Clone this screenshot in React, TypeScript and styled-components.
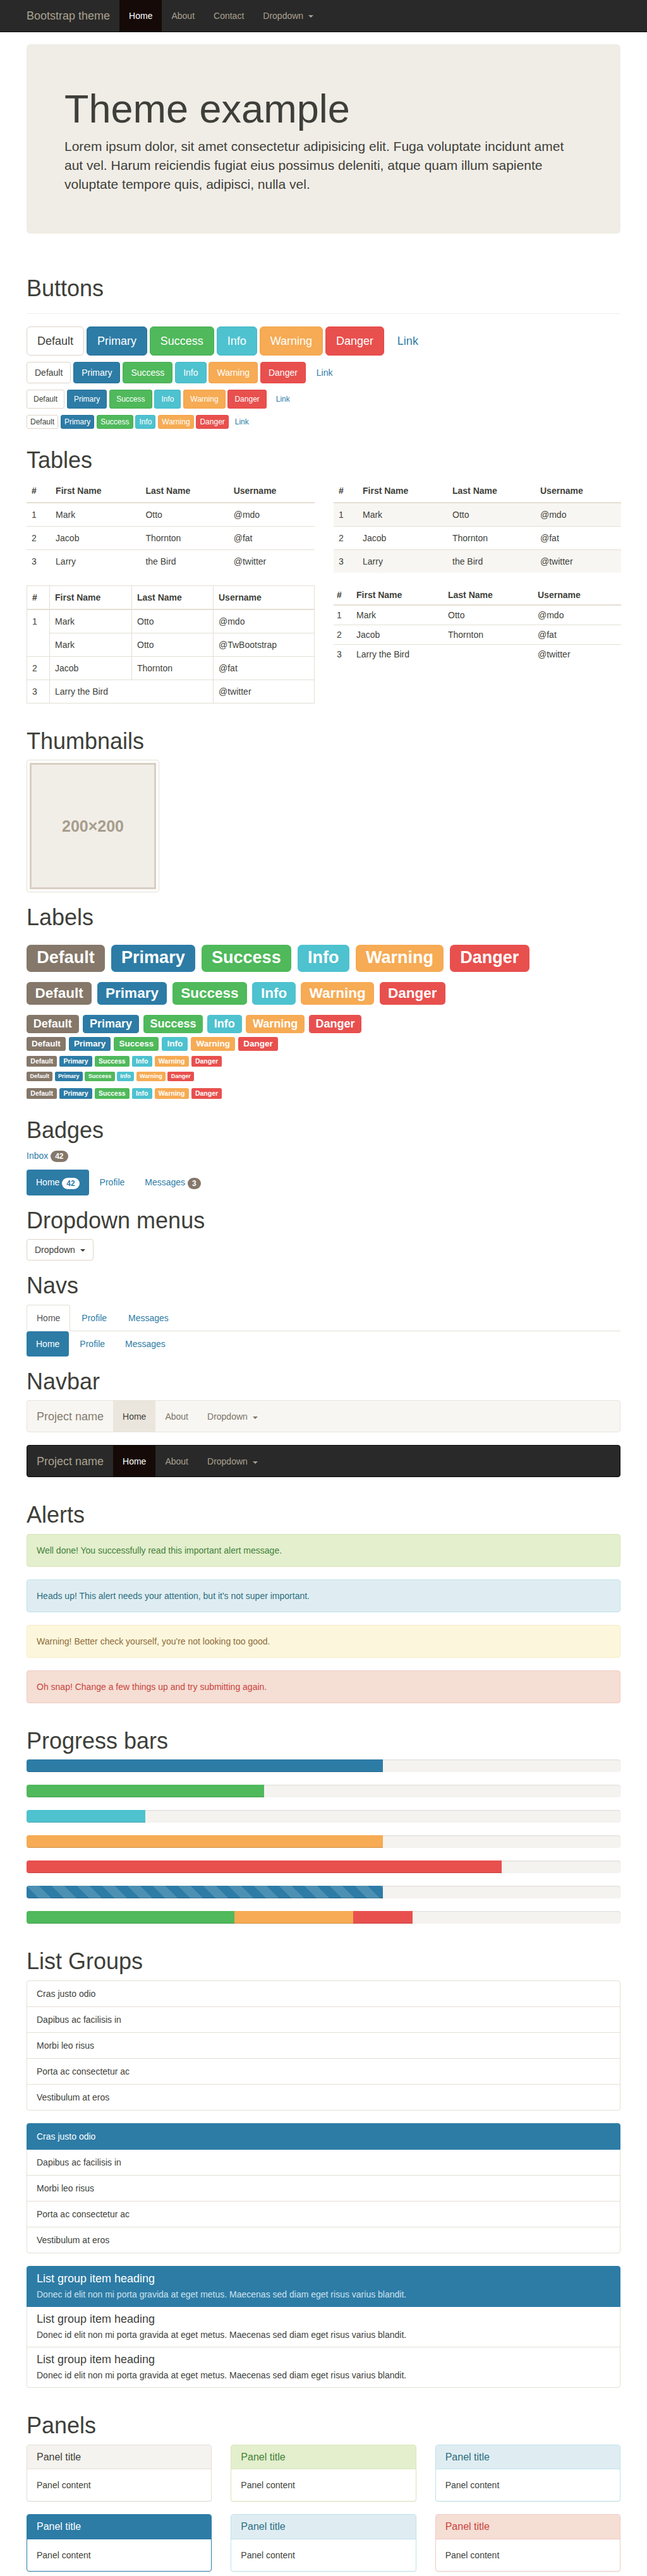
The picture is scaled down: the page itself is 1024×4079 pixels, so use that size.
import { Fragment } from 'react'
import styled, { createGlobalStyle, css } from 'styled-components'

type Variant = 'default' | 'primary' | 'success' | 'info' | 'warning' | 'danger'
type Tone = 'default' | 'primary' | 'success' | 'info' | 'warning' | 'danger'

const primary = '#2d7ca6'
const text = '#3e3f3a'
const line = '#e4dfd5'

const solid: Record<Variant, string> = {
  default: '#85786a',
  primary: '#2d7ca6',
  success: '#4fb95b',
  info: '#4ec2cf',
  warning: '#f6ab54',
  danger: '#e8504e',
}

const edge: Record<Variant, string> = {
  default: '#ddd5c8',
  primary: '#29719a',
  success: '#47ac52',
  info: '#44b8c5',
  warning: '#f4a246',
  danger: '#e54543',
}

const tones: Record<Tone, { bg: string; fg: string; border: string }> = {
  default: { bg: '#f5f3ef', fg: text, border: line },
  primary: { bg: primary, fg: '#fff', border: primary },
  success: { bg: '#e3efcd', fg: '#43813b', border: '#d9e6bb' },
  info: { bg: '#dfedf2', fg: '#2d6e80', border: '#bfe2ea' },
  warning: { bg: '#fcf7dc', fg: '#8f6b3a', border: '#f8ebc6' },
  danger: { bg: '#f5ded4', fg: '#c8443e', border: '#efcac4' },
}

const variants: Variant[] = ['default', 'primary', 'success', 'info', 'warning', 'danger']
const title = (v: string) => v[0].toUpperCase() + v.slice(1)

const GlobalStyle = createGlobalStyle`
  * { box-sizing: border-box; }
  html, body { margin: 0; padding: 0; }
  body {
    font-family: "Liberation Sans", Arial, Helvetica, sans-serif;
    font-size: 14px;
    line-height: 1.428571429;
    color: ${text};
    background: #fff;
  }
`

/* top bar */

const TopBar = styled.nav`
  height: 51px;
  margin-bottom: 19px;
  background: #292929;
  border-bottom: 1px solid #080808;
`

const BarInner = styled.div`
  width: 940px;
  margin: 0 auto;
  display: flex;
`

const Brand = styled.a<{ $color: string; $pull?: boolean }>`
  display: block;
  height: 50px;
  padding: 15px;
  margin-left: ${p => (p.$pull ? '-15px' : '0')};
  font-size: 18px;
  line-height: 20px;
  color: ${p => p.$color};
  text-decoration: none;
`

const BarLink = styled.a<{ $color: string; $activeBg?: string; $activeColor?: string }>`
  display: block;
  height: 50px;
  padding: 15px;
  line-height: 20px;
  color: ${p => p.$activeColor || p.$color};
  background: ${p => p.$activeBg || 'transparent'};
  text-decoration: none;
`

const Caret = styled.span`
  display: inline-block;
  width: 0;
  height: 0;
  margin-left: 4px;
  vertical-align: middle;
  border-top: 4px solid;
  border-right: 4px solid transparent;
  border-left: 4px solid transparent;
`

/* layout */

const Container = styled.div`
  width: 940px;
  margin: 0 auto;
`

const Section = styled.section`
  display: flow-root;
`

const Jumbotron = styled.div`
  padding: 48px 60px;
  margin-bottom: 30px;
  background: #f0ede6;
  border-radius: 6px;
`

const JumboTitle = styled.h1`
  margin: 20px 0 10px;
  font-size: 63px;
  font-weight: 500;
  line-height: 1.1;
`

const JumboText = styled.p`
  margin: 0 0 15px;
  font-size: 21px;
  line-height: 30px;
`

const PageHeader = styled.div`
  margin: 37px 0 20px;
  padding-bottom: 9px;
  border-bottom: 1px solid #eee;
`

const H1 = styled.h1<{ $top?: number }>`
  margin: ${p => p.$top ?? 20}px 0 10px;
  font-size: 36px;
  font-weight: 500;
  line-height: 1.1;
`

const Para = styled.p<{ $bottom?: number }>`
  margin: 0 0 ${p => p.$bottom ?? 10}px;
`

/* buttons */

type Size = 'lg' | 'md' | 'sm' | 'xs'

const btnSizes: Record<Size, ReturnType<typeof css>> = {
  lg: css`padding: 10px 16px; font-size: 18px; line-height: 1.3333333; border-radius: 6px;`,
  md: css`padding: 6px 12px; font-size: 14px; line-height: 1.42857143; border-radius: 4px;`,
  sm: css`padding: 5px 10px; font-size: 12px; line-height: 1.5; border-radius: 3px;`,
  xs: css`padding: 1px 5px; font-size: 12px; line-height: 1.5; border-radius: 3px;`,
}

const Btn = styled.button<{ $v: Variant | 'link'; $size: Size }>`
  display: inline-block;
  margin: 0;
  font-family: inherit;
  font-weight: normal;
  text-align: center;
  vertical-align: middle;
  white-space: nowrap;
  cursor: pointer;
  border: 1px solid transparent;
  ${p => btnSizes[p.$size]}
  ${p =>
    p.$v === 'link'
      ? css`color: ${primary}; background: transparent;`
      : p.$v === 'default'
        ? css`color: ${text}; background: #fff; border-color: ${edge.default};`
        : css`color: #fff; background: ${solid[p.$v]}; border-color: ${edge[p.$v]};`}
`

/* tables */

const TableGrid = styled.div`
  display: grid;
  grid-template-columns: 1fr 1fr;
  column-gap: 30px;
  align-items: start;
`

const Table = styled.table<{ $striped?: boolean; $bordered?: boolean; $condensed?: boolean }>`
  width: 100%;
  table-layout: fixed;
  border-collapse: collapse;
  border-spacing: 0;
  margin-bottom: 20px;
  ${p => p.$bordered && css`border: 1px solid ${line};`}

  th,
  td {
    padding: ${p => (p.$condensed ? 5 : 8)}px;
    line-height: 20px;
    text-align: left;
    vertical-align: top;
    border-top: 1px solid ${line};
    ${p => p.$bordered && css`border: 1px solid ${line};`}
  }

  th {
    font-weight: bold;
  }

  thead th {
    vertical-align: bottom;
    border-top: ${p => (p.$bordered ? `1px solid ${line}` : '0')};
    border-bottom: 2px solid ${line};
  }

  ${p =>
    p.$striped &&
    css`
      tbody tr:nth-of-type(odd) {
        background: #f8f6f2;
      }
    `}
`

const Col = styled.col<{ $w: number }>`
  width: ${p => p.$w}px;
`

/* thumbnails */

const Thumbnail = styled.div`
  width: 210px;
  padding: 4px;
  background: #fff;
  border: 1px solid ${line};
  border-radius: 4px;
`

const Placeholder = styled.div`
  width: 200px;
  height: 200px;
  display: flex;
  align-items: center;
  justify-content: center;
  background: #f1eee8;
  border: 3px solid #d8cfc2;
  color: #a79d8d;
  font-size: 25px;
  font-weight: bold;
`

/* labels & badges */

const LabelHeading = styled.h1<{ $size: number; $top: number }>`
  margin: ${p => p.$top}px 0 10px;
  font-size: ${p => p.$size}px;
  font-weight: 500;
  line-height: 1.1;
`

const Label = styled.span<{ $v: Variant }>`
  display: inline;
  padding: 0.2em 0.6em 0.3em;
  font-size: 75%;
  font-weight: bold;
  line-height: 1;
  color: #fff;
  text-align: center;
  white-space: nowrap;
  vertical-align: baseline;
  border-radius: 0.25em;
  background: ${p => solid[p.$v]};
`

const Link = styled.a`
  color: ${primary};
  text-decoration: none;
`

const Badge = styled.span<{ $inverse?: boolean }>`
  display: inline-block;
  min-width: 10px;
  padding: 3px 7px;
  font-size: 12px;
  font-weight: bold;
  line-height: 1;
  text-align: center;
  white-space: nowrap;
  vertical-align: middle;
  border-radius: 10px;
  color: ${p => (p.$inverse ? primary : '#fff')};
  background: ${p => (p.$inverse ? '#fff' : solid.default)};
`

/* navs */

const NavList = styled.ul<{ $tabs?: boolean }>`
  display: flex;
  margin: 0;
  padding: 0;
  list-style: none;
  ${p => p.$tabs && css`border-bottom: 1px solid ${line};`}
`

const PillLink = styled.a<{ $active?: boolean; $gap?: boolean }>`
  display: block;
  margin-left: ${p => (p.$gap ? 2 : 0)}px;
  padding: 10px 15px;
  line-height: 20px;
  border-radius: 4px;
  text-decoration: none;
  color: ${p => (p.$active ? '#fff' : primary)};
  background: ${p => (p.$active ? primary : 'transparent')};
`

const TabLink = styled.a<{ $active?: boolean }>`
  display: block;
  margin: 0 2px -1px 0;
  padding: 10px 15px;
  line-height: 20px;
  border: 1px solid transparent;
  border-radius: 4px 4px 0 0;
  text-decoration: none;
  color: ${primary};
  ${p =>
    p.$active &&
    css`
      color: #555;
      background: #fff;
      border-color: ${line} ${line} transparent;
    `}
`

/* navbar */

const Navbar = styled.nav<{ $dark?: boolean }>`
  display: flex;
  height: 51px;
  margin-bottom: 20px;
  border: 1px solid ${p => (p.$dark ? '#080808' : '#e9e5dc')};
  border-radius: 4px;
  background: ${p => (p.$dark ? '#292929' : '#f8f6f2')};
  overflow: hidden;
`

const NavbarEnd = styled.div`
  height: 20px;
`

/* alerts */

const Alert = styled.div<{ $v: Tone }>`
  padding: 15px;
  margin-bottom: 20px;
  border: 1px solid ${p => tones[p.$v].border};
  border-radius: 4px;
  color: ${p => tones[p.$v].fg};
  background: ${p => tones[p.$v].bg};
`

/* progress */

const Progress = styled.div`
  display: flex;
  height: 20px;
  margin-bottom: 20px;
  overflow: hidden;
  background: #f5f3ef;
  border-radius: 4px;
  box-shadow: inset 0 1px 2px rgba(0, 0, 0, 0.1);
`

const Bar = styled.div<{ $v: Variant; $striped?: boolean }>`
  height: 100%;
  background-color: ${p => solid[p.$v]};
  box-shadow: inset 0 -1px 0 rgba(0, 0, 0, 0.15);
  ${p =>
    p.$striped &&
    css`
      background-image: linear-gradient(
        45deg,
        rgba(255, 255, 255, 0.15) 25%,
        transparent 25%,
        transparent 50%,
        rgba(255, 255, 255, 0.15) 50%,
        rgba(255, 255, 255, 0.15) 75%,
        transparent 75%,
        transparent
      );
      background-size: 40px 40px;
    `}
`

/* list groups */

const ListGroup = styled.div`
  margin-bottom: 20px;
`

const ListItem = styled.a<{ $active?: boolean }>`
  position: relative;
  display: block;
  padding: 10px 15px;
  margin-bottom: -1px;
  background: #fff;
  border: 1px solid ${line};
  color: ${text};
  text-decoration: none;

  &:first-child {
    border-top-left-radius: 4px;
    border-top-right-radius: 4px;
  }
  &:last-child {
    margin-bottom: 0;
    border-bottom-left-radius: 4px;
    border-bottom-right-radius: 4px;
  }

  ${p =>
    p.$active &&
    css`
      z-index: 2;
      color: #fff;
      background: ${primary};
      border-color: ${primary};
    `}
`

const ItemHeading = styled.h4`
  margin: 0 0 5px;
  font-size: 18px;
  font-weight: 500;
  line-height: 1.1;
`

const ItemText = styled.p<{ $active?: boolean }>`
  margin: 0;
  line-height: 1.3;
  color: ${p => (p.$active ? '#cfe2ee' : 'inherit')};
`

/* panels */

const PanelGrid = styled.div`
  display: grid;
  grid-template-columns: repeat(3, 1fr);
  column-gap: 30px;
`

const Panel = styled.div<{ $v: Tone }>`
  margin-bottom: 20px;
  background: #fff;
  border: 1px solid ${p => tones[p.$v].border};
  border-radius: 4px;
  box-shadow: 0 1px 1px rgba(0, 0, 0, 0.05);
`

const PanelHeading = styled.div<{ $v: Tone }>`
  padding: 10px 15px;
  border-bottom: 1px solid ${p => tones[p.$v].border};
  border-top-left-radius: 3px;
  border-top-right-radius: 3px;
  color: ${p => tones[p.$v].fg};
  background: ${p => tones[p.$v].bg};
`

const PanelTitle = styled.h3`
  margin: 0;
  font-size: 16px;
  font-weight: 500;
  line-height: 1.1;
`

const PanelBody = styled.div`
  padding: 15px;
`

/* data */

const people = [
  ['1', 'Mark', 'Otto', '@mdo'],
  ['2', 'Jacob', 'Thornton', '@fat'],
  ['3', 'Larry', 'the Bird', '@twitter'],
]

const headingLevels = [
  { tag: 'h1', size: 36, top: 20 },
  { tag: 'h2', size: 30, top: 20 },
  { tag: 'h3', size: 24, top: 20 },
  { tag: 'h4', size: 18, top: 10 },
  { tag: 'h5', size: 14, top: 8 },
  { tag: 'h6', size: 12, top: 10 },
] as const

const listItems = ['Cras justo odio', 'Dapibus ac facilisis in', 'Morbi leo risus', 'Porta ac consectetur ac', 'Vestibulum at eros']
const loremItem = 'Donec id elit non mi porta gravida at eget metus. Maecenas sed diam eget risus varius blandit.'

const panels: Tone[] = ['default', 'success', 'info', 'primary', 'info', 'danger']

const Head = () => (
  <thead>
    <tr>
      <th>#</th>
      <th>First Name</th>
      <th>Last Name</th>
      <th>Username</th>
    </tr>
  </thead>
)

const Cols = ({ w }: { w: number[] }) => (
  <colgroup>
    {w.map((x, i) => (
      <Col key={i} $w={x} />
    ))}
  </colgroup>
)

const labelRow = () =>
  variants.map((v, i) => (
    <Fragment key={v}>
      {i > 0 && ' '}
      <Label $v={v}>{title(v)}</Label>
    </Fragment>
  ))

const buttonRow = (size: Size) =>
  [...variants, 'link' as const].map((v, i) => (
    <Fragment key={v}>
      {i > 0 && ' '}
      <Btn $v={v} $size={size}>
        {title(v)}
      </Btn>
    </Fragment>
  ))

export default function App() {
  return (
    <>
      <GlobalStyle />
      <TopBar>
        <BarInner>
          <Brand $pull $color="#a9a190" href="#">
            Bootstrap theme
          </Brand>
          <BarLink $color="#a9a190" $activeBg="#150a07" $activeColor="#fff" href="#">
            Home
          </BarLink>
          <BarLink $color="#a9a190" href="#">
            About
          </BarLink>
          <BarLink $color="#a9a190" href="#">
            Contact
          </BarLink>
          <BarLink $color="#a9a190" href="#">
            Dropdown <Caret />
          </BarLink>
        </BarInner>
      </TopBar>

      <Container>
        <Jumbotron>
          <JumboTitle>Theme example</JumboTitle>
          <JumboText>
            Lorem ipsum dolor, sit amet consectetur adipisicing elit. Fuga voluptate incidunt amet aut vel. Harum
            reiciendis fugiat eius possimus deleniti, atque quam illum sapiente voluptate tempore quis, adipisci, nulla
            vel.
          </JumboText>
        </Jumbotron>

        <Section>
          <PageHeader>
            <H1 $top={0}>Buttons</H1>
          </PageHeader>
          <Para>{buttonRow('lg')}</Para>
          <Para>{buttonRow('md')}</Para>
          <Para>{buttonRow('sm')}</Para>
          <Para>{buttonRow('xs')}</Para>
        </Section>

        <Section>
          <H1>Tables</H1>
          <TableGrid>
            <Table>
              <Cols w={[38, 142, 139, 136]} />
              <Head />
              <tbody>
                {people.map(r => (
                  <tr key={r[0]}>
                    {r.map((c, i) => (
                      <td key={i}>{c}</td>
                    ))}
                  </tr>
                ))}
              </tbody>
            </Table>
            <Table $striped>
              <Cols w={[38, 142, 139, 136]} />
              <Head />
              <tbody>
                {people.map(r => (
                  <tr key={r[0]}>
                    {r.map((c, i) => (
                      <td key={i}>{c}</td>
                    ))}
                  </tr>
                ))}
              </tbody>
            </Table>
            <Table $bordered>
              <Cols w={[36, 130, 129, 160]} />
              <Head />
              <tbody>
                <tr>
                  <td rowSpan={2}>1</td>
                  <td>Mark</td>
                  <td>Otto</td>
                  <td>@mdo</td>
                </tr>
                <tr>
                  <td>Mark</td>
                  <td>Otto</td>
                  <td>@TwBootstrap</td>
                </tr>
                <tr>
                  <td>2</td>
                  <td>Jacob</td>
                  <td>Thornton</td>
                  <td>@fat</td>
                </tr>
                <tr>
                  <td>3</td>
                  <td colSpan={2}>Larry the Bird</td>
                  <td>@twitter</td>
                </tr>
              </tbody>
            </Table>
            <Table $condensed>
              <Cols w={[31, 145, 142, 137]} />
              <Head />
              <tbody>
                <tr>
                  <td>1</td>
                  <td>Mark</td>
                  <td>Otto</td>
                  <td>@mdo</td>
                </tr>
                <tr>
                  <td>2</td>
                  <td>Jacob</td>
                  <td>Thornton</td>
                  <td>@fat</td>
                </tr>
                <tr>
                  <td>3</td>
                  <td colSpan={2}>Larry the Bird</td>
                  <td>@twitter</td>
                </tr>
              </tbody>
            </Table>
          </TableGrid>
        </Section>

        <Section>
          <H1>Thumbnails</H1>
          <Thumbnail>
            <Placeholder>200×200</Placeholder>
          </Thumbnail>
        </Section>

        <Section>
          <H1>Labels</H1>
          {headingLevels.map(h => (
            <LabelHeading key={h.tag} as={h.tag} $size={h.size} $top={h.top}>
              {labelRow()}
            </LabelHeading>
          ))}
          <Para>{labelRow()}</Para>
        </Section>

        <Section>
          <H1>Badges</H1>
          <Para $bottom={12}>
            <Link href="#">
              Inbox <Badge>42</Badge>
            </Link>
          </Para>
          <NavList>
            <li>
              <PillLink $active href="#">
                Home <Badge $inverse>42</Badge>
              </PillLink>
            </li>
            <li>
              <PillLink $gap href="#">
                Profile
              </PillLink>
            </li>
            <li>
              <PillLink $gap href="#">
                Messages <Badge>3</Badge>
              </PillLink>
            </li>
          </NavList>
        </Section>

        <Section>
          <H1>Dropdown menus</H1>
          <div>
            <Btn $v="default" $size="md">
              Dropdown <Caret />
            </Btn>
          </div>
        </Section>

        <Section>
          <H1>Navs</H1>
          <NavList $tabs>
            <li>
              <TabLink $active href="#">
                Home
              </TabLink>
            </li>
            <li>
              <TabLink href="#">Profile</TabLink>
            </li>
            <li>
              <TabLink href="#">Messages</TabLink>
            </li>
          </NavList>
          <NavList>
            <li>
              <PillLink $active href="#">
                Home
              </PillLink>
            </li>
            <li>
              <PillLink $gap href="#">
                Profile
              </PillLink>
            </li>
            <li>
              <PillLink $gap href="#">
                Messages
              </PillLink>
            </li>
          </NavList>
        </Section>

        <Section>
          <H1>Navbar</H1>
          <Navbar>
            <Brand $color="#857c6f" href="#">
              Project name
            </Brand>
            <BarLink $color="#7a7368" $activeBg="#ebe6dd" $activeColor={text} href="#">
              Home
            </BarLink>
            <BarLink $color="#7a7368" href="#">
              About
            </BarLink>
            <BarLink $color="#7a7368" href="#">
              Dropdown <Caret />
            </BarLink>
          </Navbar>
          <Navbar $dark>
            <Brand $color="#a9a190" href="#">
              Project name
            </Brand>
            <BarLink $color="#a9a190" $activeBg="#150a07" $activeColor="#fff" href="#">
              Home
            </BarLink>
            <BarLink $color="#a9a190" href="#">
              About
            </BarLink>
            <BarLink $color="#a9a190" href="#">
              Dropdown <Caret />
            </BarLink>
          </Navbar>
          <NavbarEnd />
        </Section>

        <Section>
          <H1 $top={0}>Alerts</H1>
          <Alert $v="success">Well done! You successfully read this important alert message.</Alert>
          <Alert $v="info">Heads up! This alert needs your attention, but it's not super important.</Alert>
          <Alert $v="warning">Warning! Better check yourself, you're not looking too good.</Alert>
          <Alert $v="danger">Oh snap! Change a few things up and try submitting again.</Alert>
        </Section>

        <Section>
          <H1>Progress bars</H1>
          <Progress>
            <Bar $v="primary" style={{ width: '60%' }} />
          </Progress>
          <Progress>
            <Bar $v="success" style={{ width: '40%' }} />
          </Progress>
          <Progress>
            <Bar $v="info" style={{ width: '20%' }} />
          </Progress>
          <Progress>
            <Bar $v="warning" style={{ width: '60%' }} />
          </Progress>
          <Progress>
            <Bar $v="danger" style={{ width: '80%' }} />
          </Progress>
          <Progress>
            <Bar $v="primary" $striped style={{ width: '60%' }} />
          </Progress>
          <Progress>
            <Bar $v="success" style={{ width: '35%' }} />
            <Bar $v="warning" style={{ width: '20%' }} />
            <Bar $v="danger" style={{ width: '10%' }} />
          </Progress>
        </Section>

        <Section>
          <H1>List Groups</H1>
          <ListGroup>
            {listItems.map(t => (
              <ListItem as="div" key={t}>
                {t}
              </ListItem>
            ))}
          </ListGroup>
          <ListGroup>
            {listItems.map((t, i) => (
              <ListItem key={t} href="#" $active={i === 0}>
                {t}
              </ListItem>
            ))}
          </ListGroup>
          <ListGroup>
            {[0, 1, 2].map(i => (
              <ListItem key={i} href="#" $active={i === 0}>
                <ItemHeading>List group item heading</ItemHeading>
                <ItemText $active={i === 0}>{loremItem}</ItemText>
              </ListItem>
            ))}
          </ListGroup>
        </Section>

        <Section>
          <H1>Panels</H1>
          <PanelGrid>
            {panels.map((v, i) => (
              <Panel key={i} $v={v}>
                <PanelHeading $v={v}>
                  <PanelTitle>Panel title</PanelTitle>
                </PanelHeading>
                <PanelBody>Panel content</PanelBody>
              </Panel>
            ))}
          </PanelGrid>
        </Section>
      </Container>
    </>
  )
}
